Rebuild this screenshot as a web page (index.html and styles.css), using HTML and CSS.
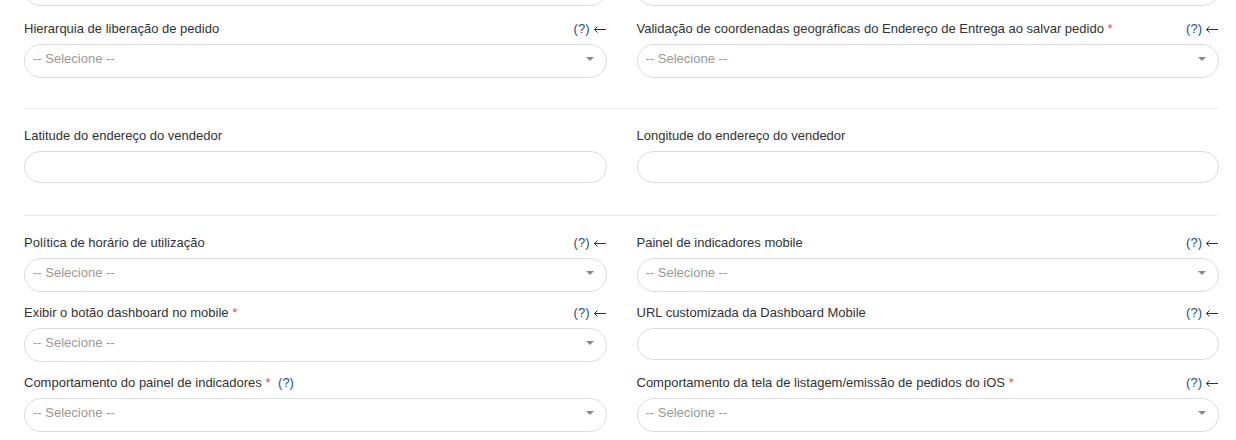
FILE: index.html
```html
<!DOCTYPE html>
<html>
<head>
  <meta charset="utf-8">
  <link rel="stylesheet" href="styles.css">
</head>
<body>
  <div class="form">
    <!-- tail of the previous row (scrolled up) -->
    <div class="row cut">
      <div class="field"><input class="control" type="text"></div>
      <div class="field"><input class="control" type="text"></div>
    </div>

    <div class="row">
      <div class="field">
        <div class="label">
          <span>Hierarquia de liberação de pedido</span>
          <span class="hint"><a class="help">(?)</a><svg class="back" viewBox="0 0 12 7"><path d="M0.5 3.5H12M0.5 3.5L3.5 0.5M0.5 3.5L3.5 6.5"/></svg></span>
        </div>
        <div class="select-wrap">
          <select class="control"><option>-- Selecione --</option></select>
        </div>
      </div>
      <div class="field">
        <div class="label">
          <span>Validação de coordenadas geográficas do Endereço de Entrega ao salvar pedido <span class="req">*</span></span>
          <span class="hint"><a class="help">(?)</a><svg class="back" viewBox="0 0 12 7"><path d="M0.5 3.5H12M0.5 3.5L3.5 0.5M0.5 3.5L3.5 6.5"/></svg></span>
        </div>
        <div class="select-wrap">
          <select class="control"><option>-- Selecione --</option></select>
        </div>
      </div>
    </div>

    <hr>

    <div class="row">
      <div class="field">
        <div class="label"><span>Latitude do endereço do vendedor</span></div>
        <input class="control" type="text">
      </div>
      <div class="field">
        <div class="label"><span>Longitude do endereço do vendedor</span></div>
        <input class="control" type="text">
      </div>
    </div>

    <hr>

    <div class="row">
      <div class="field">
        <div class="label">
          <span>Política de horário de utilização</span>
          <span class="hint"><a class="help">(?)</a><svg class="back" viewBox="0 0 12 7"><path d="M0.5 3.5H12M0.5 3.5L3.5 0.5M0.5 3.5L3.5 6.5"/></svg></span>
        </div>
        <div class="select-wrap">
          <select class="control"><option>-- Selecione --</option></select>
        </div>
      </div>
      <div class="field">
        <div class="label">
          <span>Painel de indicadores mobile</span>
          <span class="hint"><a class="help">(?)</a><svg class="back" viewBox="0 0 12 7"><path d="M0.5 3.5H12M0.5 3.5L3.5 0.5M0.5 3.5L3.5 6.5"/></svg></span>
        </div>
        <div class="select-wrap">
          <select class="control"><option>-- Selecione --</option></select>
        </div>
      </div>

      <div class="field">
        <div class="label">
          <span>Exibir o botão dashboard no mobile <span class="req">*</span></span>
          <span class="hint"><a class="help">(?)</a><svg class="back" viewBox="0 0 12 7"><path d="M0.5 3.5H12M0.5 3.5L3.5 0.5M0.5 3.5L3.5 6.5"/></svg></span>
        </div>
        <div class="select-wrap">
          <select class="control"><option>-- Selecione --</option></select>
        </div>
      </div>
      <div class="field">
        <div class="label">
          <span>URL customizada da Dashboard Mobile</span>
          <span class="hint"><a class="help">(?)</a><svg class="back" viewBox="0 0 12 7"><path d="M0.5 3.5H12M0.5 3.5L3.5 0.5M0.5 3.5L3.5 6.5"/></svg></span>
        </div>
        <input class="control" type="text">
      </div>

      <div class="field">
        <div class="label">
          <span>Comportamento do painel de indicadores <span class="req">*</span> <a class="help inline">(?)</a></span>
        </div>
        <div class="select-wrap">
          <select class="control"><option>-- Selecione --</option></select>
        </div>
      </div>
      <div class="field">
        <div class="label">
          <span>Comportamento da tela de listagem/emissão de pedidos do iOS <span class="req">*</span></span>
          <span class="hint"><a class="help">(?)</a><svg class="back" viewBox="0 0 12 7"><path d="M0.5 3.5H12M0.5 3.5L3.5 0.5M0.5 3.5L3.5 6.5"/></svg></span>
        </div>
        <div class="select-wrap">
          <select class="control"><option>-- Selecione --</option></select>
        </div>
      </div>
    </div>
  </div>
</body>
</html>
```

FILE: styles.css
```css
* {
  box-sizing: border-box;
}

body {
  margin: 0;
  background: #ffffff;
  font-family: 'Liberation Sans', Arial, sans-serif;
  font-size: 13px;
  color: #333333;
  overflow: hidden;
}

.form {
  padding: 0 17px 0 24px;
}

.row {
  display: grid;
  grid-template-columns: 1fr 1fr;
  column-gap: 30px;
}

.row.cut {
  margin-top: -26px;
}

.field {
  margin-bottom: 11px;
}

.label {
  display: flex;
  justify-content: space-between;
  align-items: baseline;
  line-height: 18px;
  margin-top: 1px;
  margin-bottom: 6px;
  white-space: nowrap;
}

.req {
  color: #d9534f;
}

.hint {
  display: flex;
  align-items: center;
  gap: 4px;
  margin-right: 1px;
}

.help {
  color: #234f7a;
  cursor: pointer;
}

.help.inline {
  margin-left: 4px;
}

/* little back arrow after the help link */
.back {
  width: 12px;
  height: 7px;
  fill: none;
  stroke: #333333;
  stroke-width: 1;
}

.control {
  display: block;
  width: 100%;
  margin: 0;
  border: 1px solid #dcdcdc;
  background: #ffffff;
  font-family: inherit;
  font-size: 13px;
  outline: none;
}

input.control {
  height: 32px;
  margin-bottom: 2px;
  border-radius: 16px;
  padding: 0 12px;
}

select.control {
  height: 34px;
  border-radius: 17px;
  padding: 0 8px 6px;
  color: #999999;
  appearance: none;
  -webkit-appearance: none;
}

.select-wrap {
  position: relative;
}

/* dropdown caret */
.select-wrap::after {
  content: '';
  position: absolute;
  right: 13px;
  top: 13px;
  border-left: 4px solid transparent;
  border-right: 4px solid transparent;
  border-top: 4px solid #888888;
  pointer-events: none;
}

hr {
  border: 0;
  border-top: 1px solid #eeeeee;
  margin: 19px 0 17px;
  height: 0;
}
```
